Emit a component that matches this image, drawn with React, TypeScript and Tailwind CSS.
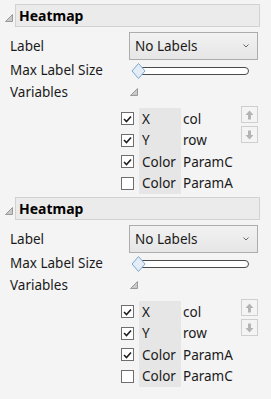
import React from 'react';

type VarRow = { checked: boolean; role: string; name: string };

const Corner = ({ className = '' }: { className?: string }) => (
  <svg width="8" height="8" viewBox="0 0 8 8" className={className}>
    <polygon points="0.5,7.5 7.5,7.5 7.5,0.5" fill="#c9c9c9" stroke="#9a9a9a" strokeWidth="1" />
  </svg>
);

const Check = ({ checked }: { checked: boolean }) => (
  <div className="flex h-[13px] w-[13px] items-center justify-center border border-[#6e6e6e] bg-white">
    {checked && (
      <svg width="9" height="8" viewBox="0 0 9 8">
        <path d="M1 4 L3.5 6.5 L8 1.5" fill="none" stroke="#1e1e1e" strokeWidth="1.6" />
      </svg>
    )}
  </div>
);

const MoveButton = ({ up }: { up: boolean }) => (
  <div className="flex h-[17px] w-[17px] items-center justify-center border border-[#cfcfcf] bg-[#f4f4f4]">
    <svg width="9" height="10" viewBox="0 0 9 10">
      {up ? (
        <path d="M4.5 0.5 L8.5 5 L6 5 L6 9.5 L3 9.5 L3 5 L0.5 5 Z" fill="#b4b4b4" />
      ) : (
        <path d="M4.5 9.5 L8.5 5 L6 5 L6 0.5 L3 0.5 L3 5 L0.5 5 Z" fill="#b4b4b4" />
      )}
    </svg>
  </div>
);

function HeatmapPanel({ vars }: { vars: VarRow[] }) {
  return (
    <div>
      <div className="flex items-end pl-[5px]">
        <Corner className="mb-[5px] mr-[2px]" />
        <div className="flex h-[23px] w-[245px] items-center border border-[#d2d2d2] bg-[#ebebeb] pl-[3px] text-[14px] font-bold text-black">
          Heatmap
        </div>
      </div>
      <div className="grid grid-cols-[119px_1fr] pl-[10px] text-[13.5px] text-[#1a1a1a]">
        <div className="mt-[5px] flex h-[28px] items-center">Label</div>
        <div className="mt-[5px] flex h-[28px] w-[129px] items-center justify-between border border-[#acacac] bg-gradient-to-b from-[#f2f2f2] to-[#e6e6e6] pl-[5px] pr-[8px]">
          <span>No Labels</span>
          <svg width="6" height="4" viewBox="0 0 6 4">
            <path d="M0.5 0.5 L3 3 L5.5 0.5" fill="none" stroke="#6a6a6a" strokeWidth="1" />
          </svg>
        </div>
        <div className="flex h-[21px] items-center">Max Label Size</div>
        <div className="flex h-[21px] items-center">
          <div className="relative ml-[2px] h-[16px] w-[118px]">
            <div className="absolute left-[8px] top-[4px] h-[8px] w-[110px] rounded-full border border-[#4a4a4a] bg-white" />
            <svg width="15" height="16" viewBox="0 0 15 16" className="absolute left-0 top-0">
              <polygon points="7.5,0.5 14,8 7.5,15.5 1,8" fill="#e3edf8" stroke="#7fa4cf" strokeWidth="1" />
            </svg>
          </div>
        </div>
        <div className="flex h-[22px] items-center">Variables</div>
        <div className="flex h-[22px] items-center pl-[1px]">
          <Corner />
        </div>
      </div>
      <div className="mt-[5px] flex pl-[121px]">
        <div className="flex flex-col">
          {vars.map((v, i) => (
            <div key={i} className="flex h-[21.5px] items-center text-[13.5px] text-[#1a1a1a]">
              <Check checked={v.checked} />
              <div className="ml-[5px] flex h-full w-[42px] items-center bg-[#e6e6e6] pl-[3px]">{v.role}</div>
              <div className="pl-[2px]">{v.name}</div>
            </div>
          ))}
        </div>
        <div className="ml-auto mr-[13px] mt-[-2px] flex flex-col gap-[3px]">
          <MoveButton up />
          <MoveButton up={false} />
        </div>
      </div>
    </div>
  );
}

export default function App() {
  return (
    <div
      className="h-[399px] w-[271px] overflow-hidden bg-[#f4f4f4] pt-[4px]"
      style={{ fontFamily: '"Noto Sans", "Open Sans", sans-serif' }}
    >
      <HeatmapPanel
        vars={[
          { checked: true, role: 'X', name: 'col' },
          { checked: true, role: 'Y', name: 'row' },
          { checked: true, role: 'Color', name: 'ParamC' },
          { checked: false, role: 'Color', name: 'ParamA' },
        ]}
      />
      <div className="h-[3px]" />
      <HeatmapPanel
        vars={[
          { checked: true, role: 'X', name: 'col' },
          { checked: true, role: 'Y', name: 'row' },
          { checked: true, role: 'Color', name: 'ParamA' },
          { checked: false, role: 'Color', name: 'ParamC' },
        ]}
      />
    </div>
  );
}
